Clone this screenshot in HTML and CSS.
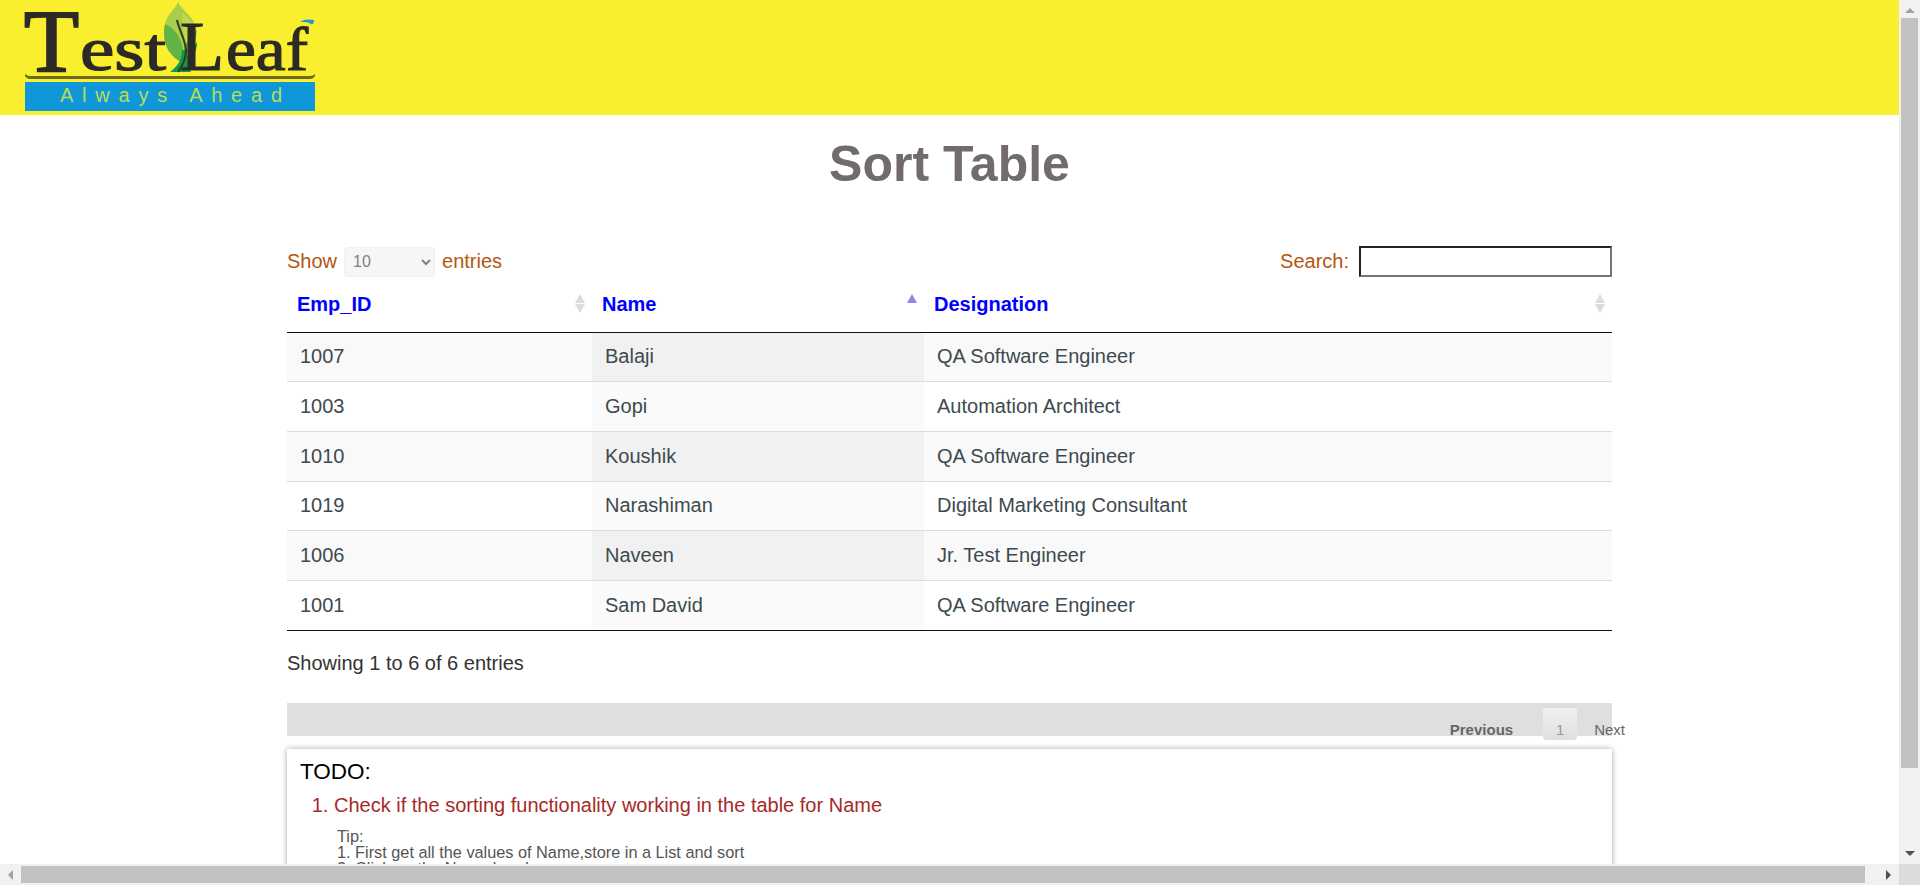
FILE: index.html
```html
<!DOCTYPE html>
<html lang="en">
<head>
    <meta charset="UTF-8">
    <title>Sort Table</title>
    <link rel="stylesheet" href="styles.css">
</head>
<body>
    <div class="window">
        <div class="page">
            <header class="topbar">
                <svg class="logo" width="330" height="115" viewBox="0 0 330 115">
                    <path class="leaf-light" d="M178 2c-3 8-11 12-13 22-2 12 5 24 14 32 8-8 16-20 15-32-1-8-12-13-16-22z"/>
                    <path class="leaf-pale" d="M182 12c5 6 13 10 14 20 1 8-4 16-11 22z"/>
                    <path class="leaf-mid" d="M165 24c9 4 16 12 18 26l-2 12c-10-5-17-15-17-28 0-4 0-7 1-10z"/>
                    <path class="leaf-mid" d="M197 30c-1 10-5 20-12 26l-1-8c3-7 8-14 13-18z"/>
                    <path class="leaf-dark" d="M170 72c7-5 12-12 12-22l5 0c1 8 1 16 4 22z"/>
                    <path class="leaf-dark" d="M186 60c2-6 7-13 11-18 0 8-3 15-9 22z"/>
                    <path class="stem" d="M177 20c2 10 8 18 9 30 0 8-3 15-8 22"/>
                    <text class="logo-big" x="24" y="71" textLength="55" lengthAdjust="spacingAndGlyphs">T</text>
                    <text class="logo-word" x="80" y="70" textLength="86" lengthAdjust="spacingAndGlyphs">est</text>
                    <text class="logo-el" x="180" y="70" textLength="44" lengthAdjust="spacingAndGlyphs">L</text>
                    <text class="logo-word" x="226" y="70" textLength="82" lengthAdjust="spacingAndGlyphs">eaf</text>
                    <path class="drop" d="M300 22c4-3 9-3 14-2 0 3-1 5-3 4-3-2-6-2-11-2z"/>
                    <path class="rule" d="M25 74c2 1 3 2 5 2h280c2 0 4-1 5-2v2c-1 2-3 3-5 3H30c-2 0-4-1-5-3z"/>
                    <rect class="logo-band" x="25" y="82" width="290" height="29"/>
                    <text class="logo-tag" x="60" y="102" textLength="222">Always Ahead</text>
                </svg>
            </header>

            <h1 class="title">Sort Table</h1>

            <div class="table-wrap">
                <div class="controls">
                    <label class="length">Show
                        <select class="length-select"><option>10</option></select>
                        entries</label>
                    <label class="search">Search: <input class="search-input" type="text"></label>
                </div>

                <table class="sort-table">
                    <thead>
                        <tr>
                            <th class="col-id">Emp_ID<span class="sorter"><i class="up"></i><i class="down"></i></span></th>
                            <th class="col-name">Name<span class="sorter sorter-asc"><i class="up"></i></span></th>
                            <th class="col-desig">Designation<span class="sorter"><i class="up"></i><i class="down"></i></span></th>
                        </tr>
                    </thead>
                    <tbody>
                        <tr class="odd"><td>1007</td><td class="sorted">Balaji</td><td>QA Software Engineer</td></tr>
                        <tr><td>1003</td><td class="sorted">Gopi</td><td>Automation Architect</td></tr>
                        <tr class="odd"><td>1010</td><td class="sorted">Koushik</td><td>QA Software Engineer</td></tr>
                        <tr><td>1019</td><td class="sorted">Narashiman</td><td>Digital Marketing Consultant</td></tr>
                        <tr class="odd"><td>1006</td><td class="sorted">Naveen</td><td>Jr. Test Engineer</td></tr>
                        <tr><td>1001</td><td class="sorted">Sam David</td><td>QA Software Engineer</td></tr>
                    </tbody>
                </table>

                <p class="info">Showing 1 to 6 of 6 entries</p>

                <div class="pager">
                    <span class="pager-prev">Previous</span>
                    <span class="pager-num">1</span>
                    <span class="pager-next">Next</span>
                </div>

                <div class="todo">
                    <h2 class="todo-head">TODO:</h2>
                    <ol class="todo-list">
                        <li>Check if the sorting functionality working in the table for Name</li>
                    </ol>
                    <p class="tip">Tip:<br>1. First get all the values of Name,store in a List and sort<br>2. Click on the Name header</p>
                </div>
            </div>
        </div>

        <div class="vbar">
            <span class="arrow arrow-up"></span>
            <span class="vthumb"></span>
            <span class="arrow arrow-down"></span>
        </div>
        <div class="hbar">
            <span class="arrow arrow-left"></span>
            <span class="hthumb"></span>
            <span class="arrow arrow-right"></span>
        </div>
        <div class="corner"></div>
    </div>
</body>
</html>
```

FILE: styles.css
```css
/* General Styles */
html, body {
    height: 100%;
    margin: 0;
    overflow: hidden;
}

body {
    font-family: 'Liberation Sans', Arial, sans-serif;
    background-color: #ffffff;
    color: #333333;
}

.window {
    display: grid;
    grid-template-columns: 1fr 21px;
    grid-template-rows: 1fr 21px;
    height: 100%;
}

.page {
    overflow: hidden;
    min-width: 0;
}

/* Header */
.topbar {
    height: 115px;
    background-color: #f9ef2e;
}

.logo {
    display: block;
}

.logo text {
    font-family: 'Liberation Serif', serif;
    fill: #2b2a26;
    stroke: #2b2a26;
    stroke-width: 1.2;
}

.logo .logo-big { font-size: 88px; stroke-width: 2; }
.logo .logo-word { font-size: 62px; }
.logo .logo-el { font-size: 70px; }
.logo .logo-tag {
    font-family: 'Liberation Sans', sans-serif;
    font-size: 20px;
    fill: #b7dd55;
    stroke: none;
}

.logo-band { fill: #0f97d9; }
.rule { fill: #6b6a20; }
.drop { fill: #1c9ad8; }
.leaf-light { fill: #a6cf4a; }
.leaf-pale { fill: #c3d94a; }
.leaf-mid { fill: #62b345; }
.leaf-dark { fill: #0c9a4b; }
.stem { fill: none; stroke: #3a3520; stroke-width: 2; }

.title {
    margin: 22px 0 0;
    font-size: 50px;
    line-height: 55px;
    text-align: center;
    color: #716b6b;
}

/* Table */
.table-wrap {
    width: 1325px;
    margin: 0 0 0 287px;
}

.controls {
    display: flex;
    justify-content: space-between;
    align-items: center;
    height: 31px;
    margin-top: 54px;
    font-size: 20px;
    color: #b5560f;
}

.length, .search {
    display: flex;
    align-items: center;
    gap: 7px;
}

.search { gap: 10px; }

.length-select {
    width: 91px;
    height: 30px;
    padding: 0 4px;
    font-family: inherit;
    font-size: 16px;
    color: #808080;
    background-color: #f6f6f6;
    border: 1px solid #f0f0f0;
    border-radius: 4px;
}

.search-input {
    width: 253px;
    height: 31px;
    padding: 0;
    box-sizing: border-box;
    background: #ffffff;
    border-width: 2px;
    border-style: solid;
    border-color: #222222 #767676 #767676 #222222;
}

.sort-table {
    width: 1325px;
    border-collapse: collapse;
    table-layout: fixed;
    font-size: 20px;
}

.sort-table th {
    position: relative;
    box-sizing: border-box;
    height: 55px;
    padding: 0 10px;
    text-align: left;
    color: #0000ff;
    border-bottom: 1px solid #111111;
}

.col-id { width: 305px; }
.col-name { width: 332px; }

.sort-table td {
    height: 48.7px;
    padding: 0 13px;
    color: #3d4a4f;
    border-bottom: 1px solid #dddddd;
}

.sort-table tr.odd td { background-color: #f9f9f9; }
.sort-table td.sorted { background-color: #fafafa; }
.sort-table tr.odd td.sorted { background-color: #f1f1f1; }
.sort-table tbody tr:last-child td { border-bottom: 1px solid #111111; }

/* sort arrows sit over the header cell */
.sorter {
    position: absolute;
    right: 7px;
    top: 17px;
    display: flex;
    flex-direction: column;
    gap: 1px;
}

.sorter i {
    display: block;
    width: 0;
    height: 0;
    border-left: 5.5px solid transparent;
    border-right: 5.5px solid transparent;
}

.sorter .up { border-bottom: 9px solid #dcdcdc; }
.sorter .down { border-top: 9px solid #dcdcdc; }
.sorter-asc { top: 17px; }
.sorter-asc .up { border-bottom-color: #8a8ae0; }

.info {
    margin: 20px 0 0;
    font-size: 20px;
    line-height: 24px;
    color: #333333;
}

.pager {
    display: flex;
    justify-content: flex-end;
    align-items: flex-end;
    height: 33px;
    margin-top: 28px;
    font-size: 15px;
    color: #666666;
    background-color: #dfdfdf;
}

.pager-prev {
    font-weight: bold;
    margin-bottom: -2px;
}

.pager-num {
    width: 34px;
    height: 32px;
    margin: 0 17px -4px 30px;
    box-sizing: border-box;
    padding-top: 13px;
    text-align: center;
    color: #999999;
    background: linear-gradient(#f0f0f0, #dfdfdf);
    border-radius: 3px;
}

.pager-next {
    margin-right: -13px;
    margin-bottom: -2px;
}

/* TODO card */
.todo {
    margin-top: 13px;
    padding: 10px 13px 20px;
    background-color: #ffffff;
    box-shadow: 0 0 6px rgba(0, 0, 0, 0.35);
}

.todo-head {
    margin: 0;
    font-size: 22.5px;
    line-height: 26px;
    font-weight: normal;
    color: #000000;
}

.todo-list {
    margin: 8px 0 0;
    padding-left: 34px;
    font-size: 20px;
    line-height: 24px;
    color: #a52a2a;
}

.tip {
    margin: 11px 0 0 37px;
    font-size: 16.3px;
    line-height: 16px;
    color: #555555;
}

/* Scrollbars */
.vbar, .hbar {
    display: flex;
    align-items: center;
    justify-content: space-between;
    background-color: #f1f1f1;
}

.vbar { flex-direction: column; }

.vthumb {
    flex: none;
    width: 17px;
    height: 750px;
    margin-bottom: auto;
    background-color: #c1c1c1;
}

.hthumb {
    flex: none;
    width: 1844px;
    height: 17px;
    margin-right: auto;
    background-color: #c1c1c1;
}

.corner { background-color: #dcdcdc; }

.arrow {
    flex: none;
    display: flex;
    width: 0;
    height: 0;
}

.arrow-up {
    margin: 8px 0 5px;
    border-left: 5px solid transparent;
    border-right: 5px solid transparent;
    border-bottom: 5px solid #a3a3a3;
}

.arrow-down {
    margin-bottom: 8px;
    border-left: 5px solid transparent;
    border-right: 5px solid transparent;
    border-top: 5px solid #505050;
}

.arrow-left {
    margin: 0 8px;
    border-top: 5px solid transparent;
    border-bottom: 5px solid transparent;
    border-right: 5px solid #a3a3a3;
}

.arrow-right {
    margin-right: 8px;
    border-top: 5px solid transparent;
    border-bottom: 5px solid transparent;
    border-left: 5px solid #505050;
}
```
